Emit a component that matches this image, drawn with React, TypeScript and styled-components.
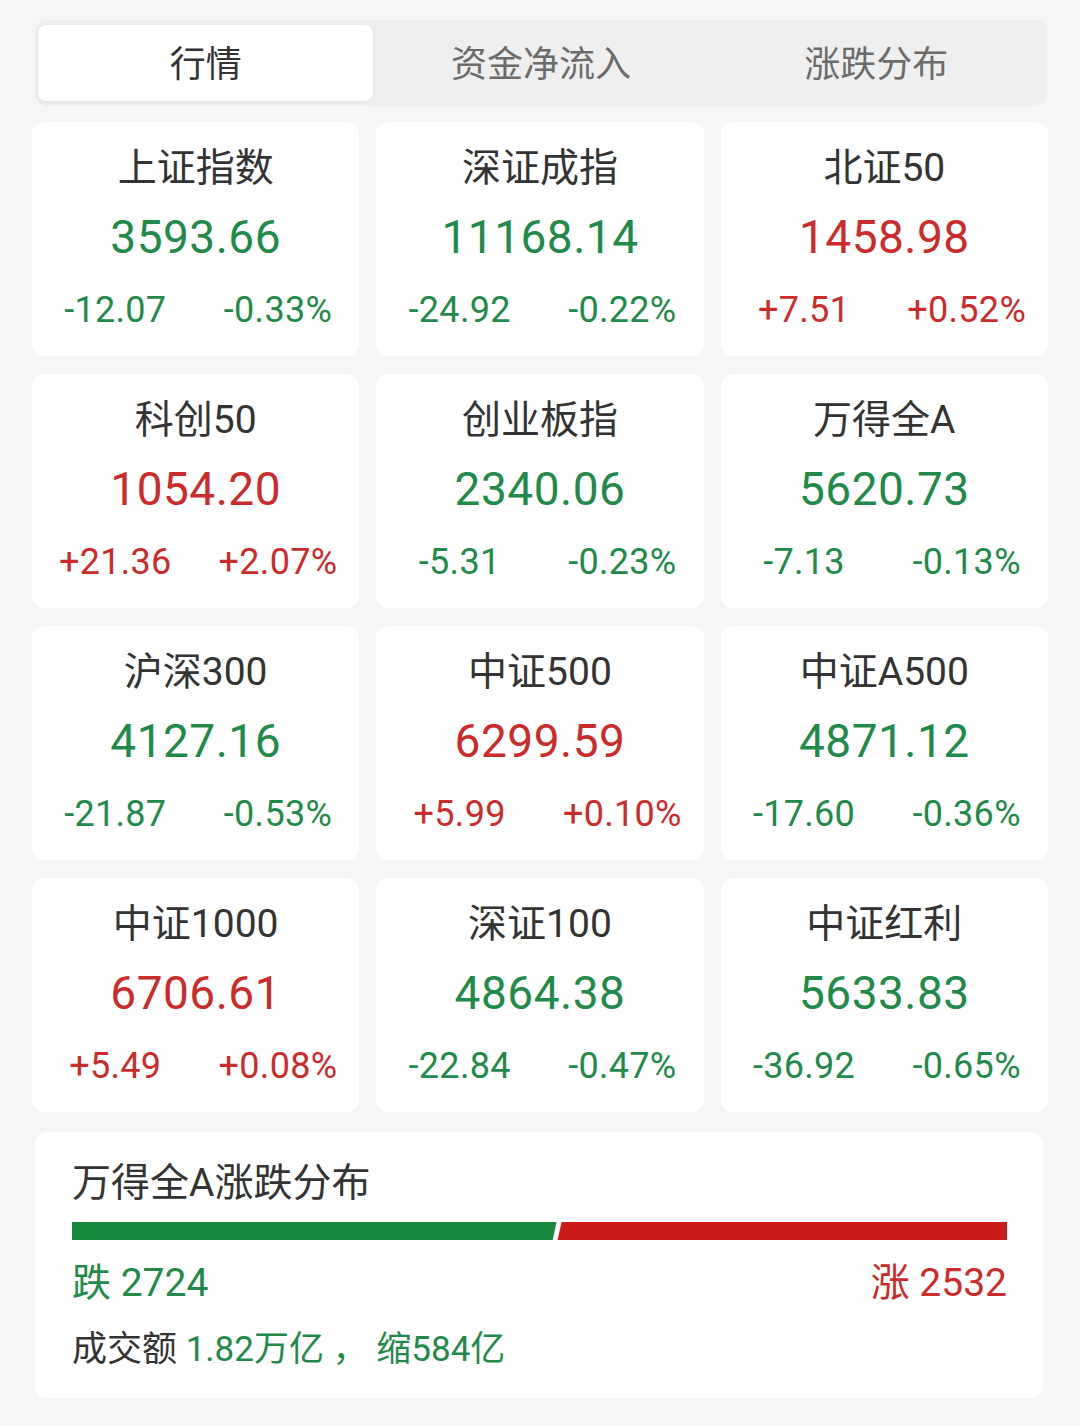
import styled, { createGlobalStyle } from "styled-components"

const GlobalStyle = createGlobalStyle`
    body {
        margin: 0;
        background: #f6f6f6;
        font-family: Roboto, "Noto Sans CJK SC", sans-serif;
    }
`

const GREEN = '#1f8a4a'
const RED = '#cc2b2b'

type TIndex = {
    name: string
    value: string
    change: string
    pct: string
}

const indexes: TIndex[] = [
    { name: '上证指数', value: '3593.66', change: '-12.07', pct: '-0.33%' },
    { name: '深证成指', value: '11168.14', change: '-24.92', pct: '-0.22%' },
    { name: '北证50', value: '1458.98', change: '+7.51', pct: '+0.52%' },
    { name: '科创50', value: '1054.20', change: '+21.36', pct: '+2.07%' },
    { name: '创业板指', value: '2340.06', change: '-5.31', pct: '-0.23%' },
    { name: '万得全A', value: '5620.73', change: '-7.13', pct: '-0.13%' },
    { name: '沪深300', value: '4127.16', change: '-21.87', pct: '-0.53%' },
    { name: '中证500', value: '6299.59', change: '+5.99', pct: '+0.10%' },
    { name: '中证A500', value: '4871.12', change: '-17.60', pct: '-0.36%' },
    { name: '中证1000', value: '6706.61', change: '+5.49', pct: '+0.08%' },
    { name: '深证100', value: '4864.38', change: '-22.84', pct: '-0.47%' },
    { name: '中证红利', value: '5633.83', change: '-36.92', pct: '-0.65%' },
]

const tabs = ['行情', '资金净流入', '涨跌分布']

const Page = styled.div`
    padding: 20px 32px 30px;
    box-sizing: border-box;
    min-height: 1426px;
`
const TabBar = styled.div`
    display: grid;
    grid-template-columns: repeat(3, 1fr);
    margin: 0 1px 0 3px;
    padding: 5px 3px;
    background: #efefef;
    border-radius: 12px;
    height: 86px;
    box-sizing: border-box;
`
const Tab = styled.div<{ $active?: boolean }>`
    display: flex;
    align-items: center;
    justify-content: center;
    padding-bottom: 5px;
    font-family: "Noto Sans CJK SC", sans-serif;
    font-size: 36px;
    color: ${p => p.$active ? '#333' : '#6b6b6b'};
    background: ${p => p.$active ? '#fff' : 'transparent'};
    border-radius: 8px;
    box-shadow: ${p => p.$active ? '0 1px 4px rgba(0,0,0,0.06)' : 'none'};
`
const Grid = styled.div`
    display: grid;
    grid-template-columns: repeat(3, 1fr);
    gap: 18px 17px;
    margin-top: 16px;
`
const Card = styled.div`
    background: #fff;
    border-radius: 12px;
    padding: 20px 0 21px;
    display: flex;
    flex-direction: column;
    align-items: center;
`
const Name = styled.div`
    font-family: Roboto, "Noto Sans CJK SC", sans-serif;
    font-size: 39px;
    line-height: 52px;
    color: #333;
`
const Value = styled.div<{ $up: boolean }>`
    margin-top: 8px;
    font-size: 46px;
    line-height: 70px;
    color: ${p => p.$up ? RED : GREEN};
    letter-spacing: 0.5px;
`
const ChangeRow = styled.div`
    margin-top: 13px;
    width: 100%;
    display: grid;
    grid-template-columns: 1fr 1fr;
    padding: 0 0 0 2px;
    box-sizing: border-box;
`
const Change = styled.div<{ $up: boolean }>`
    text-align: center;
    font-size: 36px;
    line-height: 50px;
    color: ${p => p.$up ? RED : GREEN};
    letter-spacing: 0.3px;
`
const DistCard = styled.div`
    margin: 20px 5px 0 3px;
    background: #fff;
    border-radius: 12px;
    padding: 26px 36px 20px 37px;
`
const DistTitle = styled.div`
    font-family: Roboto, "Noto Sans CJK SC", sans-serif;
    font-size: 39px;
    line-height: 50px;
    color: #333;
`
const Bar = styled.div`
    display: flex;
    height: 18px;
    margin-top: 14px;
    overflow: hidden;
`
const BarPart = styled.div<{ $color: string }>`
    height: 100%;
    background: ${p => p.$color};
`
const Labels = styled.div`
    display: flex;
    justify-content: space-between;
    margin-top: 17px;
`
const Count = styled.div<{ $color: string }>`
    font-family: Roboto, "Noto Sans CJK SC", sans-serif;
    font-size: 39px;
    line-height: 52px;
    color: ${p => p.$color};
`
const Turnover = styled.div`
    margin-top: 13px;
    font-family: Roboto, "Noto Sans CJK SC", sans-serif;
    font-size: 35px;
    line-height: 56px;
    color: #333;
`
const Green = styled.span`
    color: ${GREEN};
`

export default function App() {
    const down = 2724
    const up = 2532
    const downPct = down / (down + up) * 100

    return (
        <>
            <GlobalStyle />
            <Page>
                <TabBar>
                    {tabs.map((t, i) => <Tab key={t} $active={i === 0}>{t}</Tab>)}
                </TabBar>
                <Grid>
                    {indexes.map(item => {
                        const isUp = item.change.startsWith('+')
                        return (
                            <Card key={item.name}>
                                <Name>{item.name}</Name>
                                <Value $up={isUp}>{item.value}</Value>
                                <ChangeRow>
                                    <Change $up={isUp}>{item.change}</Change>
                                    <Change $up={isUp}>{item.pct}</Change>
                                </ChangeRow>
                            </Card>
                        )
                    })}
                </Grid>
                <DistCard>
                    <DistTitle>万得全A涨跌分布</DistTitle>
                    <Bar>
                        <BarPart $color="#17893d" style={{ width: `${downPct}%`, clipPath: 'polygon(0 0, 100% 0, calc(100% - 4px) 100%, 0 100%)' }} />
                        <BarPart $color="#cc1b1b" style={{ flex: 1, marginLeft: '-1px', clipPath: 'polygon(6px 0, 100% 0, 100% 100%, 2px 100%)' }} />
                    </Bar>
                    <Labels>
                        <Count $color={GREEN}>跌 {down}</Count>
                        <Count $color={RED}>涨 {up}</Count>
                    </Labels>
                    <Turnover>成交额 <Green>1.82万亿 ， 缩584亿</Green></Turnover>
                </DistCard>
            </Page>
        </>
    )
}
